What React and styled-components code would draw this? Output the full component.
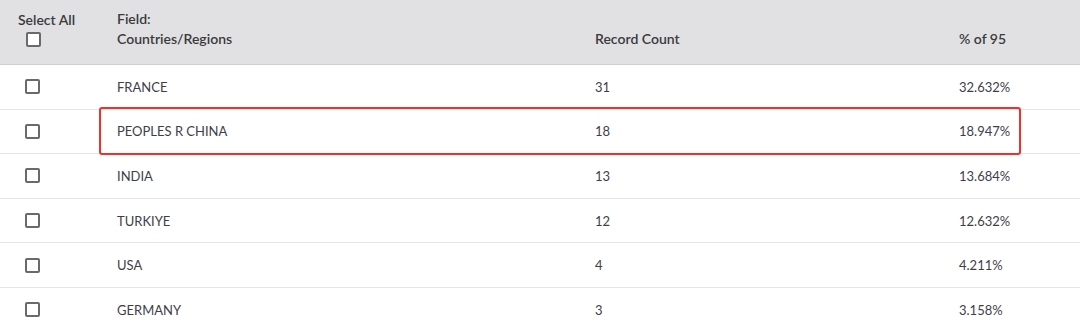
import React from 'react';
import styled, { createGlobalStyle } from 'styled-components';

const GlobalStyle = createGlobalStyle`
  html, body {
    margin: 0;
    padding: 0;
    background: #ffffff;
  }
  body {
    font-family: Lato, "Open Sans", "Liberation Sans", sans-serif;
    color: #333333;
  }
`;

const rows = [
  { name: 'FRANCE', count: 31, pct: '32.632%' },
  { name: 'PEOPLES R CHINA', count: 18, pct: '18.947%', marked: true },
  { name: 'INDIA', count: 13, pct: '13.684%' },
  { name: 'TURKIYE', count: 12, pct: '12.632%' },
  { name: 'USA', count: 4, pct: '4.211%' },
  { name: 'GERMANY', count: 3, pct: '3.158%' },
];

function App() {
  return (
    <>
      <GlobalStyle />
      <Table>
        <Header>
          <SelectCell>
            <HeadLabel>Select All</HeadLabel>
            <Box />
          </SelectCell>
          <HeadCell>
            <HeadLabel>Field:</HeadLabel>
            <HeadLabel>Countries/Regions</HeadLabel>
          </HeadCell>
          <HeadCell>
            <HeadLabel>Record Count</HeadLabel>
          </HeadCell>
          <HeadCell>
            <HeadLabel>% of 95</HeadLabel>
          </HeadCell>
        </Header>
        {rows.map((r) => (
          <Row key={r.name}>
            <BoxCell>
              <Box />
            </BoxCell>
            <Cell>{r.name}</Cell>
            <Cell>{r.count}</Cell>
            <Cell>{r.pct}</Cell>
            {r.marked && <Highlight />}
          </Row>
        ))}
      </Table>
    </>
  );
}

export default App;

const columns = '99px 478px 364px 1fr';

const Table = styled.div`
  width: 1080px;
  display: flex;
  flex-direction: column;
`;

const Header = styled.div`
  display: grid;
  grid-template-columns: ${columns};
  height: 64px;
  background: #e1e1e3;
  border-bottom: 1px solid #cfcfd1;
`;

const SelectCell = styled.div`
  display: flex;
  flex-direction: column;
  align-items: flex-start;
  padding: 10px 0 0 18px;
  gap: 2px;

  & > div:last-child {
    margin-left: 8px;
  }
`;

const HeadCell = styled.div`
  display: flex;
  flex-direction: column;
  justify-content: flex-end;
  padding: 0 0 15px 18px;
`;

const HeadLabel = styled.div`
  font-size: 14px;
  font-weight: 600;
  color: #3a3a3c;
  line-height: 20px;
`;

const Row = styled.div`
  position: relative;
  display: grid;
  grid-template-columns: ${columns};
  height: 43.6px;
  align-items: center;
  border-bottom: 1px solid #e6e6e8;
`;

const BoxCell = styled.div`
  display: flex;
  padding-left: 25px;
`;

const Box = styled.div`
  width: 11px;
  height: 11px;
  border: 2px solid #6a6a6a;
  border-radius: 2px;
  background: #fff;
`;

const Cell = styled.div`
  font-size: 13px;
  color: #3f3d4a;
  padding-left: 18px;
`;

const Highlight = styled.div`
  position: absolute;
  left: 99px;
  top: -3px;
  width: 918px;
  height: 44px;
  border: 2px solid #f0302a;
  border-radius: 3px;
  pointer-events: none;
`;
